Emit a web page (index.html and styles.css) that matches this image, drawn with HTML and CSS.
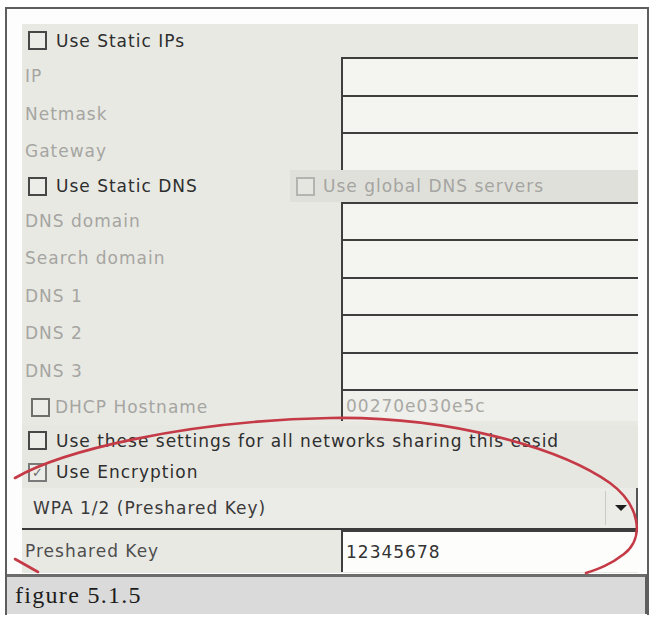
FILE: index.html
```html
<!DOCTYPE html>
<html>
<head>
<meta charset="utf-8">
<link rel="stylesheet" href="styles.css">
</head>
<body>
<div class="frame">
  <div class="area">
    <div class="panel">
      <div class="row h33"><label class="check"><span class="cb"></span><span class="txt">Use Static IPs</span></label></div>
      <div class="row h38"><span class="lbl dim">IP</span><div class="entry"></div></div>
      <div class="row h37"><span class="lbl dim">Netmask</span><div class="entry"></div></div>
      <div class="row h38"><span class="lbl dim">Gateway</span><div class="entry"></div></div>
      <div class="row h32 split">
        <label class="check"><span class="cb"></span><span class="txt">Use Static DNS</span></label>
        <label class="check shade"><span class="cb off"></span><span class="txt dim">Use global DNS servers</span></label>
      </div>
      <div class="row h37"><span class="lbl dim">DNS domain</span><div class="entry"></div></div>
      <div class="row h38"><span class="lbl dim">Search domain</span><div class="entry"></div></div>
      <div class="row h37"><span class="lbl dim">DNS 1</span><div class="entry"></div></div>
      <div class="row h38"><span class="lbl dim">DNS 2</span><div class="entry"></div></div>
      <div class="row h37"><span class="lbl dim">DNS 3</span><div class="entry"></div></div>
      <div class="row h36"><label class="check small"><span class="cb mid"></span><span class="txt dim">DHCP Hostname</span></label><div class="entry flat"><span class="val dim">00270e030e5c</span></div></div>
      <div class="row h31 dark"><label class="check"><span class="cb"></span><span class="txt">Use these settings for all networks sharing this essid</span></label></div>
      <div class="row h32 dark"><label class="check"><span class="cb on">✓</span><span class="txt">Use Encryption</span></label></div>
      <div class="combo"><span class="ctext">WPA 1/2 (Preshared Key)</span><span class="sep"></span><span class="arrow"></span></div>
      <div class="row h42"><span class="lbl key">Preshared Key</span><div class="entry white"><span class="val">12345678</span></div></div>
    </div>
  </div>
  <div class="caption">figure 5.1.5</div>
</div>
<svg class="mark" width="653" height="617" viewBox="0 0 653 617">
  <path d="M 15 478 C 60 452, 180 421, 330 418 C 450 416, 560 448, 610 483 C 640 505, 645 538, 624 554 C 610 565, 598 569, 586 573" fill="none" stroke="#c43a46" stroke-width="2.6" stroke-linecap="round"/>
  <path d="M 15 559 L 38 572" fill="none" stroke="#c43a46" stroke-width="2.6" stroke-linecap="round"/>
</svg>
</body>
</html>
```
FILE: styles.css
```css
html, body {
  margin: 0;
  padding: 0;
  background: #ffffff;
}
body {
  width: 653px;
  height: 617px;
  position: relative;
  overflow: hidden;
  font-family: "DejaVu Sans", "Liberation Sans", sans-serif;
  font-size: 17px;
  letter-spacing: 1px;
  color: #353535;
}
.frame {
  margin: 7px 4px 0 5px;
  border: 2px solid #5e5e5e;
  border-bottom: none;
  height: 606px;
  display: flex;
  flex-direction: column;
}
.area {
  padding: 15px 9px 0 15px;
  height: 549px;
  background: #fdfdfd;
}
.panel {
  background: #e9e9e4;
  height: 549px;
  display: flex;
  flex-direction: column;
}
.row {
  display: grid;
  grid-template-columns: 319px 1fr;
  align-items: center;
}
.row.split { grid-template-columns: 268px 1fr; align-items: stretch; }
.h31 { height: 31px; }
.h32 { height: 32px; }
.h33 { height: 33px; }
.h36 { height: 36px; }
.h37 { height: 37px; }
.h38 { height: 38px; }
.h42 { height: 42px; }
.dark { background: #e7e7e2; }
.row.dark { grid-template-columns: 1fr; }
.check {
  display: flex;
  align-items: center;
  gap: 9px;
  padding-left: 6px;
  white-space: nowrap;
}
.check.small { padding-left: 9px; gap: 5px; }
.check.shade { background: #e0e0db; padding-left: 6px; gap: 8px; }
.cb {
  width: 15px;
  height: 15px;
  border: 2px solid #474747;
  background: #ecece8;
  display: inline-flex;
  align-items: center;
  justify-content: center;
  font-size: 13px;
  letter-spacing: 0;
  color: #6a6a6a;
  flex: none;
}
.cb.off { border-color: #b3b3af; background: #e6e6e1; }
.cb.mid { border-color: #6f6f6c; }
.cb.on { border-color: #7a7a7a; line-height: 1; }
.txt { color: #2e2e2e; }
.dim { color: #a5a5a1; }
.lbl { padding-left: 3px; }
.lbl.key { color: #4e4e4e; padding-left: 3px; }
.entry {
  align-self: stretch;
  background: #f4f4f0;
  border-top: 2px solid #3e3e3e;
  border-left: 2px solid #3e3e3e;
  display: flex;
  align-items: center;
}
.entry.flat {
  background: #efefeb;
  margin-bottom: 4px;
}
.entry.white { background: #fdfdfb; }
.val { padding-left: 3px; color: #333333; }
.val.dim { color: #a8a8a4; }
.combo {
  height: 40px;
  background: #ebebe7;
  border-bottom: 2px solid #3a3a3a;
  display: flex;
  align-items: center;
}
.ctext {
  padding-left: 11px;
  color: #3a3a3a;
  flex: 1;
}
.sep {
  width: 1px;
  height: 34px;
  background: #c9c9c5;
  margin-right: 9px;
}
.arrow {
  width: 0;
  height: 0;
  border-left: 6px solid transparent;
  border-right: 6px solid transparent;
  border-top: 6px solid #1e1e1e;
  margin-right: 9px;
}
.combo::after {
  content: "";
  width: 2px;
  align-self: stretch;
  background: #555;
}
.caption {
  margin-top: 1px;
  border-top: 3px solid #6c6c6c;
  background: #dadada;
  height: 37px;
  font-family: "Liberation Serif", "Times New Roman", serif;
  font-size: 24px;
  letter-spacing: 1.3px;
  color: #1c1c1c;
  padding-left: 8px;
  display: flex;
  align-items: center;
  border-right: 2px solid #5e5e5e;
}
.mark {
  position: absolute;
  left: 0;
  top: 0;
  pointer-events: none;
}
```
